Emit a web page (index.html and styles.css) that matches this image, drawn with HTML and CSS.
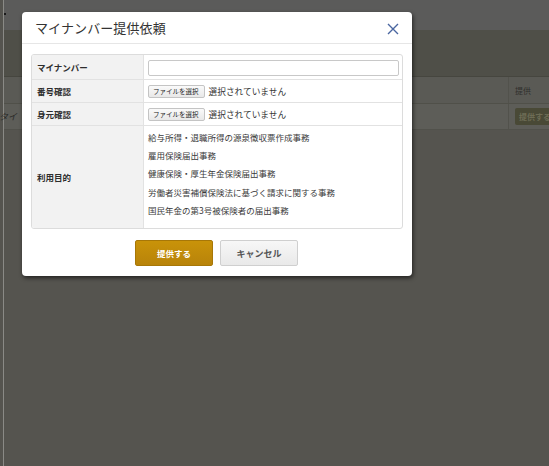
FILE: index.html
```html
<!DOCTYPE html>
<html lang="ja">
<head>
<meta charset="utf-8">
<link rel="stylesheet" href="styles.css">
</head>
<body>
<div class="page">
  <div class="topbar"><span class="dot"></span></div>
  <div class="subbar"></div>
  <div class="bg-head"><div class="bg-fill"></div><div class="bg-cell">提供</div></div>
  <div class="bg-row"><div class="bg-fill bg-name">タイ</div><div class="bg-cell"><span class="bg-btn">提供する</span></div></div>
</div>

<div class="modal">
  <div class="modal-header">
    <h1 class="modal-title">マイナンバー提供依頼</h1>
    <svg class="close" width="12" height="12" viewBox="0 0 12 12"><path d="M1 1 L11 11 M11 1 L1 11" stroke="#4a66a0" stroke-width="1.4" fill="none"/></svg>
  </div>
  <div class="modal-body">
    <div class="form-table">
      <div class="label r1">マイナンバー</div>
      <div class="value r1"><span class="text-input"></span></div>
      <div class="label r2">番号確認</div>
      <div class="value r2"><span class="file-btn">ファイルを選択</span><span class="file-text">選択されていません</span></div>
      <div class="label r3">身元確認</div>
      <div class="value r3"><span class="file-btn">ファイルを選択</span><span class="file-text">選択されていません</span></div>
      <div class="label r4 last">利用目的</div>
      <div class="value r4 last purposes">
        <div>給与所得・退職所得の源泉徴収票作成事務</div>
        <div>雇用保険届出事務</div>
        <div>健康保険・厚生年金保険届出事務</div>
        <div>労働者災害補償保険法に基づく請求に関する事務</div>
        <div>国民年金の第3号被保険者の届出事務</div>
      </div>
    </div>
  </div>
  <div class="modal-footer">
    <button class="btn btn-primary">提供する</button>
    <button class="btn btn-cancel">キャンセル</button>
  </div>
</div>
</body>
</html>
```

FILE: styles.css
```css
html, body {
  margin: 0;
  padding: 0;
}
body {
  width: 549px;
  height: 466px;
  overflow: hidden;
  background: #55544f;
  font-family: "Noto Sans CJK JP", "Noto Sans", sans-serif;
  position: relative;
}
.page {
  height: 466px;
  border-left: 1px solid #8a8a86;
  margin-left: 3px;
  display: flex;
  flex-direction: column;
}
.topbar {
  height: 30px;
  background: #5b5b5a;
  position: relative;
}
.dot {
  position: absolute;
  left: 0;
  top: 13px;
  width: 2px;
  height: 2px;
  background: #1a1a1a;
}
.subbar {
  height: 46px;
  background: #4f4f48;
  border-bottom: 1px solid #46463f;
}
.bg-head {
  height: 26px;
  background: #5a5a55;
  display: flex;
  border-bottom: 1px solid #505049;
}
.bg-row {
  height: 25px;
  background: #5d5d58;
  display: flex;
  border-bottom: 1px solid #51514b;
}
.bg-fill {
  flex: 1;
}
.bg-name {
  font-size: 9px;
  color: #2a2a28;
  font-style: italic;
  line-height: 25px;
  margin-left: -5px;
}
.bg-cell {
  box-sizing: border-box;
  width: 41px;
  border-left: 1px solid #52524c;
  font-size: 8px;
  color: #2f2f2c;
  display: flex;
  align-items: center;
  padding-left: 6px;
  overflow: hidden;
}
.bg-btn {
  background: #494936;
  color: #6d6c55;
  font-size: 8px;
  font-weight: bold;
  padding: 3px 4px;
  border-radius: 2px;
  white-space: nowrap;
}

.modal {
  position: absolute;
  left: 22px;
  top: 12px;
  width: 390px;
  height: 264px;
  background: #fff;
  border-radius: 4px;
  box-shadow: 1px 2px 4px rgba(0, 0, 0, 0.6);
  display: flex;
  flex-direction: column;
}
.modal-header {
  height: 31px;
  border-bottom: 1px solid #e6e6e6;
  display: flex;
  align-items: center;
  justify-content: space-between;
  padding: 0 13px 0 13px;
}
.modal-title {
  margin: 0;
  font-size: 13px;
  font-weight: normal;
  color: #333;
  letter-spacing: 0.1px;
}
.close {
  margin-top: 2px;
}
.modal-body {
  padding: 10px 9px 0 9px;
}
.form-table {
  display: grid;
  grid-template-columns: 112px 1fr;
  grid-template-rows: 25px 23px 23px 102px;
  border: 1px solid #dcdcdc;
  border-radius: 3px;
  overflow: hidden;
}
.label {
  background: #f2f2f2;
  border-right: 1px solid #e2e2e2;
  border-bottom: 1px solid #e2e2e2;
  font-size: 8.5px;
  font-weight: bold;
  color: #2d2d2d;
  display: flex;
  align-items: center;
  padding-left: 5px;
}
.value {
  border-bottom: 1px solid #e2e2e2;
  display: flex;
  align-items: center;
  padding-left: 4px;
  font-size: 8.5px;
  color: #3a3a3a;
}
.last {
  border-bottom: none;
}
.text-input {
  display: block;
  width: 249px;
  height: 14px;
  border: 1px solid #c8c8c8;
  border-radius: 2px;
  background: #fff;
  margin-top: 1px;
}
.file-btn {
  font-size: 6.5px;
  color: #222;
  border: 1px solid #c4c4c4;
  border-radius: 2px;
  background: linear-gradient(#fafafa, #e8e8e8);
  padding: 1px 5px 1px 4px;
  margin-right: 4px;
  line-height: 9px;
}
.file-text {
  font-size: 8.7px;
  color: #333;
}
.purposes {
  flex-direction: column;
  align-items: flex-start;
  justify-content: flex-start;
  padding-top: 5px;
}
.purposes div {
  height: 18.2px;
  line-height: 12px;
}
.modal-footer {
  display: flex;
  justify-content: center;
  gap: 7px;
  padding-top: 11px;
  padding-right: 1px;
}
.btn {
  width: 78px;
  height: 26px;
  border-radius: 2px;
  font-family: inherit;
  font-size: 8.5px;
  font-weight: bold;
  cursor: pointer;
  padding: 0;
}
.btn-primary {
  background: linear-gradient(#c99309, #b8830a);
  border: 1px solid #a77707;
  color: #fff;
}
.btn-cancel {
  background: linear-gradient(#f7f7f7, #e9e9e9);
  border: 1px solid #cfcfcf;
  color: #555;
  font-size: 9px;
}
```
